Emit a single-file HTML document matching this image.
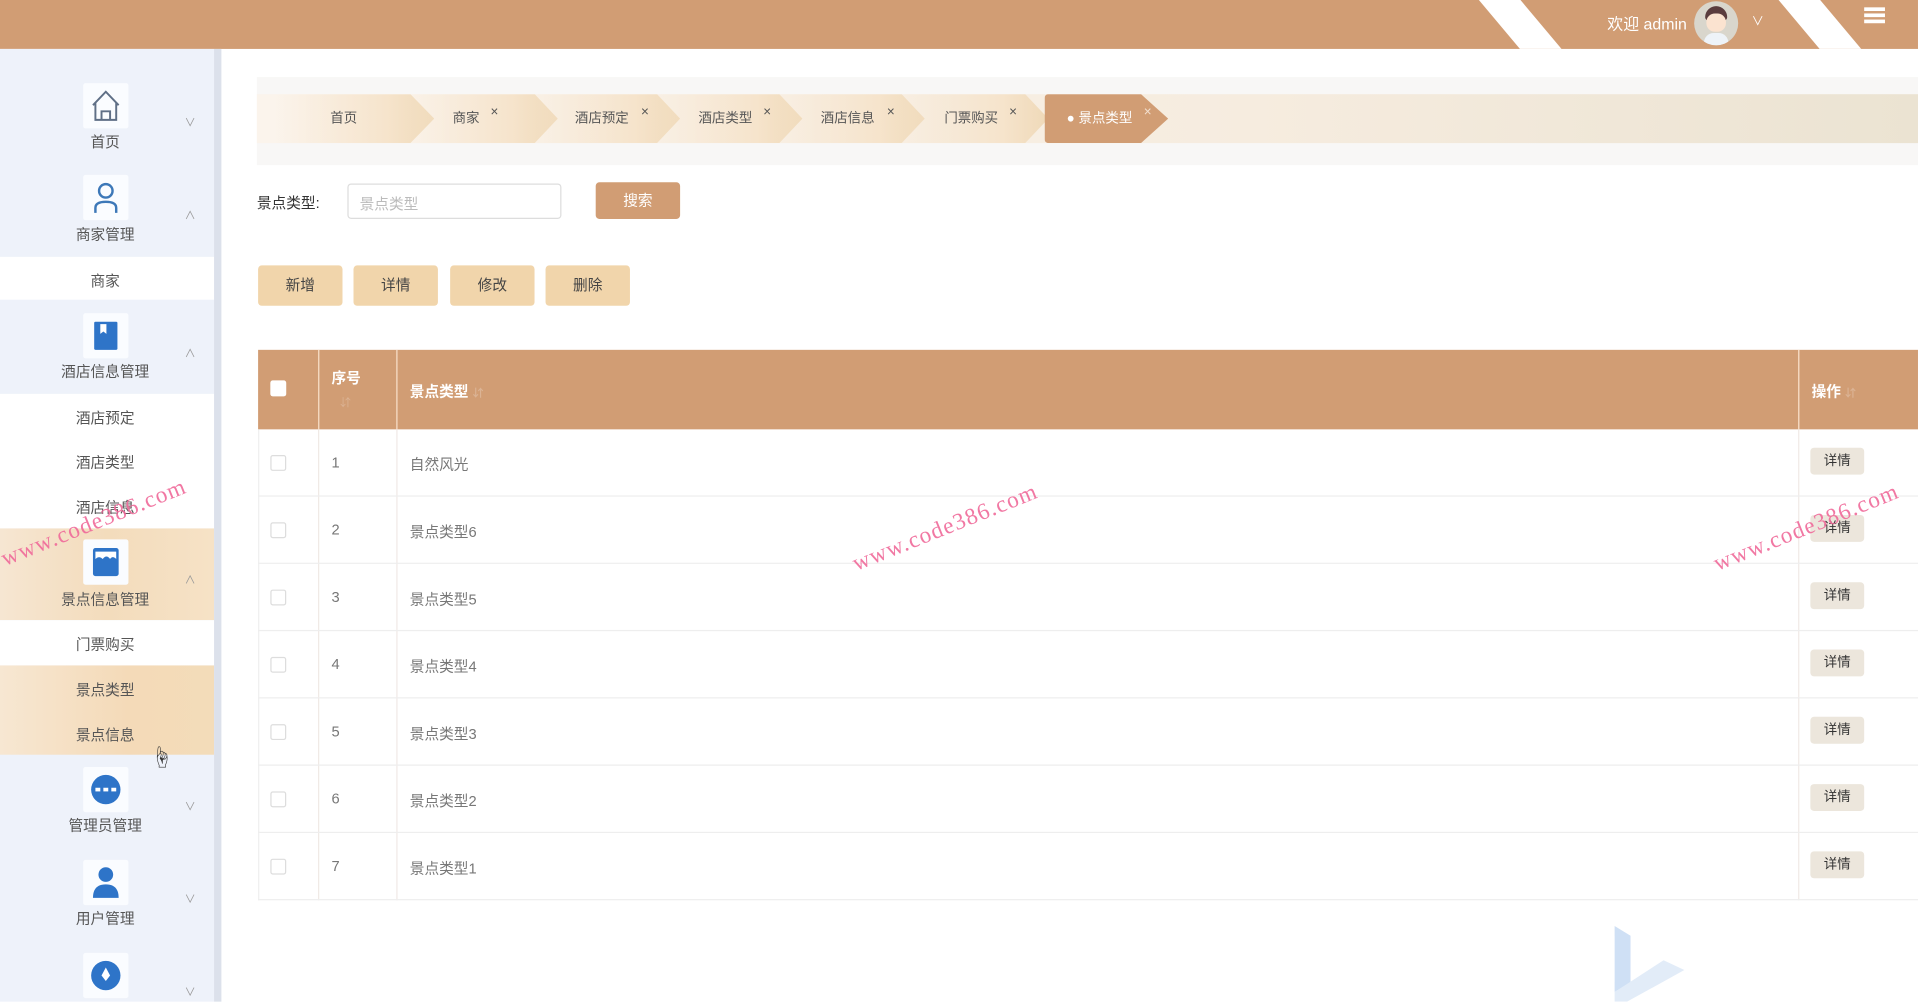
<!DOCTYPE html>
<html><head><meta charset="utf-8"><style>
*{margin:0;padding:0;box-sizing:border-box}
html,body{width:1918px;height:1002px;overflow:hidden;background:#fff}
body{font-family:"Liberation Sans","Noto Sans CJK SC",sans-serif;font-size:12px;color:#555}
#s{position:absolute;left:0;top:0;width:1568px;height:819px;transform:scale(1.22321);transform-origin:0 0;overflow:hidden;background:#fff}
.a{position:absolute}
.hdr{left:0;top:0;width:1568px;height:40px;background:#d19d74;overflow:hidden}
.str{position:absolute;top:-5px;width:34px;height:60px;background:#fff;transform:skewX(40deg)}
.side{left:0;top:40px;width:175px;height:779px;background:#eef2fa}
.sb{left:175px;top:40px;width:6px;height:779px;background:#dce1eb}
.ib{position:absolute;left:68px;width:37px;height:37px;background:#fafcff;border-radius:2px}
.lbl{position:absolute;left:0;width:172px;text-align:center;font-size:12px;color:#555}
.chev{position:absolute;left:150px;width:11px;font-size:9px;color:#999;text-align:center}
.sub{position:absolute;left:0;width:172px;text-align:center;font-size:12px;color:#555}
.tab{position:absolute;top:77px;height:40px;line-height:40px;font-size:11px;color:#555;clip-path:polygon(0 0,85% 0,100% 50%,85% 100%,0 100%);background:linear-gradient(90deg,rgba(255,255,255,0) 0%,#f6e4cc 70%,#efd9b8 100%)}
.tab b{position:absolute;font-weight:normal}
.x{position:absolute;top:-6px;font-size:11px;color:#555}
.btn{position:absolute;top:217px;width:69px;height:33px;background:#f1d5ab;border-radius:3px;text-align:center;line-height:33px;font-size:12px;color:#444}
.row{position:absolute;left:211px;width:1357px;height:55px;border-bottom:1px solid #eee}
.cb{position:absolute;left:10px;top:21px;width:13px;height:13px;border:1px solid #ddd;border-radius:2px;background:#fff}
.num{position:absolute;left:60px;top:20px;color:#777}
.nm{position:absolute;left:124px;top:20px;color:#777}
.dt{position:absolute;left:1269px;top:15px;width:44px;height:22px;background:#ece6dc;border-radius:3px;text-align:center;line-height:22px;font-size:11px;color:#333}
.wm{position:absolute;color:#f06a9a;font-family:"Liberation Serif",serif;font-size:19px;letter-spacing:1px;transform:rotate(-22deg);transform-origin:0 0;white-space:nowrap;opacity:.9}
</style></head><body><div id="s">
<div class="a hdr">
<div class="str" style="left:1230px"></div>
<div class="str" style="left:1475px"></div>
<div class="a" style="left:1314px;top:9px;color:#fff;font-size:13px">欢迎 admin</div>
<div class="a" style="left:1385px;top:1px;width:36px;height:36px;border-radius:50%;background:#d9d6cc;overflow:hidden">
<div class="a" style="left:9px;top:4px;width:18px;height:12px;border-radius:9px 9px 3px 3px;background:#5a3c3e"></div>
<div class="a" style="left:10px;top:10px;width:16px;height:15px;border-radius:7px;background:#fbe3d0"></div>
<div class="a" style="left:8px;top:26px;width:20px;height:12px;border-radius:8px 8px 0 0;background:#eef3f8"></div></div>
<div class="a" style="left:1432px;top:9px;color:#fff;font-size:10px">&#x2228;</div>
<div class="a" style="left:1524px;top:6px;width:17px;height:3px;background:#fff"></div>
<div class="a" style="left:1524px;top:11px;width:17px;height:3px;background:#fff"></div>
<div class="a" style="left:1524px;top:16px;width:17px;height:3px;background:#fff"></div>
</div>

<div class="a side"></div>
<div class="a" style="left:0;top:210px;width:175px;height:35px;background:#fff"></div>
<div class="a" style="left:0;top:322px;width:175px;height:110px;background:#fff"></div>
<div class="a" style="left:0;top:432px;width:175px;height:75px;background:linear-gradient(90deg,#f6e6d2,#f3dcbc 50%,#f6e2c6)"></div>
<div class="a" style="left:0;top:507px;width:175px;height:37px;background:#fff"></div>
<div class="a" style="left:0;top:544px;width:175px;height:73px;background:linear-gradient(90deg,#f7e7d2,#f4dab8 60%,#f3dcb9)"></div>
<div class="a sb"></div>

<div class="ib" style="top:68px"><svg width="37" height="37" viewBox="0 0 37 37"><path d="M8 18 L18.5 7 L29 18 M10 16 V30 H27 V16 M15 30 V23 H22 V30" fill="none" stroke="#5f6f86" stroke-width="1.6"/></svg></div>
<div class="lbl" style="top:107px">首页</div><div class="chev" style="top:93px">&#x2228;</div>
<div class="ib" style="top:143px"><svg width="37" height="37" viewBox="0 0 37 37"><circle cx="18.5" cy="13" r="5.5" fill="none" stroke="#3d78b8" stroke-width="2"/><path d="M10 31 V27 Q10 22 18.5 22 Q27 22 27 27 V31" fill="none" stroke="#3d78b8" stroke-width="2"/></svg></div>
<div class="lbl" style="top:183px">商家管理</div><div class="chev" style="top:169px">&#x2227;</div>
<div class="sub" style="top:221px">商家</div>
<div class="ib" style="top:256px"><svg width="37" height="37" viewBox="0 0 37 37"><rect x="9" y="7" width="19" height="23" rx="1" fill="#2e74c8"/><path d="M14 9 V17 L16.5 15 L19 17 V9Z" fill="#fff"/></svg></div>
<div class="lbl" style="top:295px">酒店信息管理</div><div class="chev" style="top:282px">&#x2227;</div>
<div class="sub" style="top:333px">酒店预定</div>
<div class="sub" style="top:369px">酒店类型</div>
<div class="sub" style="top:406px">酒店信息</div>
<div class="ib" style="top:441px"><svg width="37" height="37" viewBox="0 0 37 37"><rect x="8" y="7" width="21" height="23" rx="2" fill="#2e74c8"/><path d="M10 10 H27 V16 Q24 13 22 16 Q19 12 16 16 Q13 13 10 16Z" fill="#fff"/></svg></div>
<div class="lbl" style="top:481px">景点信息管理</div><div class="chev" style="top:467px">&#x2227;</div>
<div class="sub" style="top:518px">门票购买</div>
<div class="sub" style="top:555px">景点类型</div>
<div class="sub" style="top:592px">景点信息</div>
<div class="a" style="left:123px;top:606px;font-size:18px;color:#333">&#x261D;</div>
<div class="ib" style="top:627px"><svg width="37" height="37" viewBox="0 0 37 37"><circle cx="18.5" cy="18.5" r="12" fill="#2e74c8"/><rect x="10" y="17" width="4" height="3" fill="#fff"/><rect x="16.5" y="17" width="4" height="3" fill="#fff"/><rect x="23" y="17" width="4" height="3" fill="#fff"/></svg></div>
<div class="lbl" style="top:666px">管理员管理</div><div class="chev" style="top:652px">&#x2228;</div>
<div class="ib" style="top:703px"><svg width="37" height="37" viewBox="0 0 37 37"><circle cx="18.5" cy="12" r="6" fill="#2e74c8"/><path d="M8 31 Q8 20 18.5 20 Q29 20 29 31Z" fill="#2e74c8"/></svg></div>
<div class="lbl" style="top:742px">用户管理</div><div class="chev" style="top:728px">&#x2228;</div>
<div class="ib" style="top:779px"><svg width="37" height="37" viewBox="0 0 37 37"><circle cx="18.5" cy="18.5" r="12" fill="#2e74c8"/><path d="M18.5 12 L22 18.5 L18.5 23 L15 18.5Z" fill="#fff"/></svg></div>
<div class="chev" style="top:804px">&#x2228;</div>

<!-- tabs -->
<div class="a" style="left:210px;top:63px;width:1358px;height:72px;background:#f8f7f6"></div>
<div class="a" style="left:210px;top:77px;width:1358px;height:40px;background:linear-gradient(90deg,#fbf4ec,#f6ecdf 60%,#ebe3d2)"></div>
<div class="tab" style="left:225px;width:130px"><b style="left:45px">首页</b></div>
<div class="tab" style="left:330px;width:126px"><b style="left:40px">商家</b><span class="x" style="left:71px;top:-5px">×</span></div>
<div class="tab" style="left:430px;width:126px"><b style="left:40px">酒店预定</b><span class="x" style="left:94px;top:-5px">×</span></div>
<div class="tab" style="left:530px;width:126px"><b style="left:41px">酒店类型</b><span class="x" style="left:94px;top:-5px">×</span></div>
<div class="tab" style="left:630px;width:126px"><b style="left:41px">酒店信息</b><span class="x" style="left:95px;top:-5px">×</span></div>
<div class="tab" style="left:731px;width:126px"><b style="left:41px">门票购买</b><span class="x" style="left:94px;top:-5px">×</span></div>
<div class="tab" style="left:854px;width:101px;background:#d19d74;color:#fff;clip-path:polygon(0 0,78% 0,100% 50%,78% 100%,0 100%);border-radius:3px"><b style="left:18px">● 景点类型</b><span class="x" style="left:81px;top:-5px;color:#f3e0d0">×</span></div>

<!-- search -->
<div class="a" style="left:210px;top:157px;color:#333;font-size:12px">景点类型:</div>
<div class="a" style="left:284px;top:150px;width:175px;height:29px;border:1px solid #ddd;border-radius:3px;padding:7px 9px;color:#bbb;font-size:12px">景点类型</div>
<div class="a" style="left:487px;top:149px;width:69px;height:30px;background:#d19d74;border-radius:3px;color:#fff;text-align:center;line-height:30px">搜索</div>

<div class="btn" style="left:211px">新增</div>
<div class="btn" style="left:289px">详情</div>
<div class="btn" style="left:368px">修改</div>
<div class="btn" style="left:446px">删除</div>

<!-- table -->
<div class="a" style="left:211px;top:286px;width:1357px;height:65px;background:#d19d74"></div>
<div class="a" style="left:260px;top:286px;width:1px;height:450px;background:#f0e9e6"></div>
<div class="a" style="left:324px;top:286px;width:1px;height:450px;background:#f0e9e6"></div>
<div class="a" style="left:1470px;top:286px;width:1px;height:450px;background:#f0e9e6"></div>
<div class="a" style="left:260px;top:286px;width:1px;height:65px;background:#f5d7bd"></div>
<div class="a" style="left:324px;top:286px;width:1px;height:65px;background:#f5d7bd"></div>
<div class="a" style="left:1470px;top:286px;width:1px;height:65px;background:#f5d7bd"></div>
<div class="a" style="left:211px;top:351px;width:1px;height:385px;background:#eee"></div>
<div class="a" style="left:221px;top:311px;width:13px;height:13px;background:#fff;border-radius:2px"></div>
<div class="a" style="left:271px;top:300px;color:#fff;font-weight:bold">序号</div>
<div class="a" style="left:278px;top:322px;color:#dbb394;font-size:9px">⇵</div>
<div class="a" style="left:335px;top:311px;color:#fff;font-weight:bold">景点类型 <span style="color:#dbb394;font-size:9px">⇵</span></div>
<div class="a" style="left:1481px;top:311px;color:#fff;font-weight:bold">操作 <span style="color:#dbb394;font-size:9px">⇵</span></div>

<div class="row" style="top:351px"><div class="cb"></div><div class="num">1</div><div class="nm">自然风光</div><div class="dt">详情</div></div>
<div class="row" style="top:406px"><div class="cb"></div><div class="num">2</div><div class="nm">景点类型6</div><div class="dt">详情</div></div>
<div class="row" style="top:461px"><div class="cb"></div><div class="num">3</div><div class="nm">景点类型5</div><div class="dt">详情</div></div>
<div class="row" style="top:516px"><div class="cb"></div><div class="num">4</div><div class="nm">景点类型4</div><div class="dt">详情</div></div>
<div class="row" style="top:571px"><div class="cb"></div><div class="num">5</div><div class="nm">景点类型3</div><div class="dt">详情</div></div>
<div class="row" style="top:626px"><div class="cb"></div><div class="num">6</div><div class="nm">景点类型2</div><div class="dt">详情</div></div>
<div class="row" style="top:681px"><div class="cb"></div><div class="num">7</div><div class="nm">景点类型1</div><div class="dt">详情</div></div>

<svg class="a" style="left:1315px;top:755px" width="70" height="64" viewBox="0 0 70 64"><path d="M5 2 L18 10 L18 48 L5 56Z" fill="#cfe0f5"/><path d="M5 56 L45 30 L62 38 L15 64 L5 64Z" fill="#e2ecf8"/></svg>

<div class="wm" style="left:-2px;top:448px">www.code386.com</div>
<div class="wm" style="left:694px;top:452px">www.code386.com</div>
<div class="wm" style="left:1398px;top:452px">www.code386.com</div>
</div></body></html>
